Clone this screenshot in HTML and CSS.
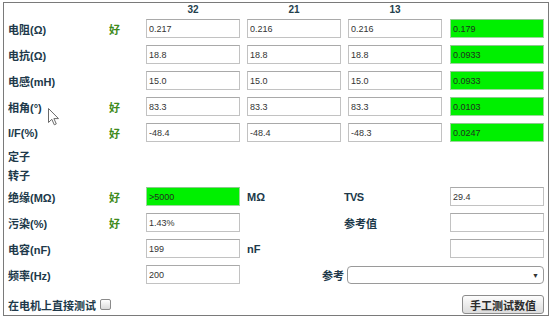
FILE: index.html
```html
<!DOCTYPE html>
<html>
<head>
<meta charset="utf-8">
<link rel="stylesheet" href="styles.css">
</head>
<body>
<div class="panel">
  <div class="grid">
    <div></div><div></div>
    <div class="hd">32</div><div class="hd">21</div><div class="hd">13</div><div></div>

    <div class="lbl">电阻(Ω)</div><div class="good">好</div>
    <input class="in" value="0.217"><input class="in" value="0.216"><input class="in" value="0.216"><input class="in ok" value="0.179">

    <div class="lbl">电抗(Ω)</div><div></div>
    <input class="in" value="18.8"><input class="in" value="18.8"><input class="in" value="18.8"><input class="in ok" value="0.0933">

    <div class="lbl">电感(mH)</div><div></div>
    <input class="in" value="15.0"><input class="in" value="15.0"><input class="in" value="15.0"><input class="in ok" value="0.0933">

    <div class="lbl">相角(°)</div><div class="good">好</div>
    <input class="in" value="83.3"><input class="in" value="83.3"><input class="in" value="83.3"><input class="in ok" value="0.0103">

    <div class="lbl">I/F(%)</div><div class="good">好</div>
    <input class="in" value="-48.4"><input class="in" value="-48.4"><input class="in" value="-48.3"><input class="in ok" value="0.0247">

    <div class="lbl full">定子</div>
    <div class="lbl full">转子</div>

    <div class="lbl">绝缘(MΩ)</div><div class="good">好</div>
    <input class="in ok" value="&gt;5000"><div class="lbl">MΩ</div><div class="lbl shift tight">TVS</div><input class="in" value="29.4">

    <div class="lbl">污染(%)</div><div class="good">好</div>
    <input class="in" value="1.43%"><div></div><div class="lbl shift">参考值</div><input class="in" value="">

    <div class="lbl">电容(nF)</div><div></div>
    <input class="in" value="199"><div class="lbl">nF</div><div></div><input class="in" value="">

    <div class="lbl">频率(Hz)</div><div></div>
    <input class="in" value="200"><div class="lbl right">参考</div>
    <div class="select"><span class="arrow">▼</span></div>
  </div>
  <div class="foot">
    <div class="direct"><span>在电机上直接测试</span><span class="check"></span></div>
    <button class="btn">手工测试数值</button>
  </div>
  <svg class="cursor" width="12" height="18" viewBox="0 0 12 18"><path d="M0.5 0.5 L0.5 14.5 L3.8 11.3 L6.3 16.8 L8.3 15.9 L5.9 10.6 L10.5 10.6 Z" fill="#fff" stroke="#6a6a6a" stroke-width="1"/></svg>
</div>
</body>
</html>
```

FILE: styles.css
```css
body {
  margin: 0;
  background: #fff;
  font-family: "Liberation Sans", "Noto Sans CJK SC", sans-serif;
}

.panel {
  position: relative;
  margin: 2px 0 0 3px;
  width: 546px;
  height: 314px;
  box-sizing: border-box;
  border: 1px solid #7a7a7a;
  padding: 0 3px 0 4px;
}

.grid {
  display: grid;
  grid-template-columns: 101px 37px 101px 101px 102px 94px;
  grid-template-rows: 13px repeat(5, 26px) 19px 19px repeat(4, 26px);
}

.hd {
  width: 94px;
  text-align: center;
  font-size: 10px;
  font-weight: bold;
  color: #24404c;
  align-self: center;
}

.lbl {
  font-size: 11px;
  font-weight: bold;
  color: #20394a;
  align-self: center;
  white-space: nowrap;
}

.full {
  grid-column: 1 / -1;
}

.shift {
  margin-left: -4px;
}

.tight {
  letter-spacing: -0.6px;
}

.right {
  text-align: right;
  padding-right: 4px;
}

.good {
  font-size: 11px;
  font-weight: bold;
  color: #3f8b1c;
  align-self: center;
}

.in {
  align-self: start;
  margin: 3px 0 0;
  width: 94px;
  height: 19px;
  box-sizing: border-box;
  border: 1px solid #c2c2c2;
  border-top-color: #a9a9a9;
  padding: 0 2px;
  font-family: "Liberation Sans", sans-serif;
  font-size: 9px;
  color: #333;
  background: #fff;
  outline: none;
}

.ok {
  background: #00f000;
  border-color: #9ad89a;
  border-top-color: #8cc88c;
  color: #1f2f1f;
}

.select {
  grid-column: 5 / 7;
  align-self: start;
  margin: 4px 0 0 -1px;
  width: 197px;
  height: 18px;
  box-sizing: border-box;
  border: 1px solid #9a9a9a;
  border-radius: 4px;
  background: #fff;
  display: flex;
  justify-content: flex-end;
  align-items: center;
}

.arrow {
  font-size: 7px;
  color: #333;
  padding-right: 4px;
}

.foot {
  display: flex;
  justify-content: space-between;
  align-items: center;
  padding-top: 7px;
}

.direct {
  display: flex;
  align-items: center;
  gap: 4px;
  font-size: 11px;
  font-weight: bold;
  color: #20394a;
}

.check {
  width: 11px;
  height: 11px;
  box-sizing: border-box;
  border: 1px solid #8a8a8a;
  border-radius: 2px;
  background: linear-gradient(#ffffff, #dadada);
}

.btn {
  width: 82px;
  height: 19px;
  margin-right: 1px;
  padding: 0;
  border: 1px solid #8c8c8c;
  border-radius: 3px;
  background: linear-gradient(#fdfdfd, #dcdcdc);
  font-family: "Liberation Sans", "Noto Sans CJK SC", sans-serif;
  font-size: 11px;
  font-weight: bold;
  color: #2b2b2b;
}

.cursor {
  position: absolute;
  left: 44px;
  top: 105px;
}
```
